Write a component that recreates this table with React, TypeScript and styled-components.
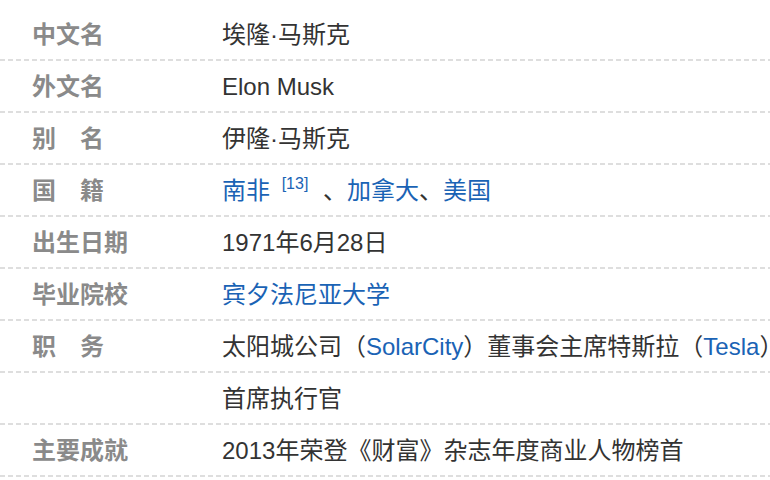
import React from 'react'
import styled, { createGlobalStyle } from 'styled-components'

const GlobalStyle = createGlobalStyle`
  html, body {
    margin: 0;
    padding: 0;
    background: #fff;
  }
  body {
    font-family: "Liberation Sans", "Noto Sans CJK SC", sans-serif;
    overflow: hidden;
  }
`

const InfoList = styled.div`
  width: 770px;
  height: 480px;
  padding-top: 9px;
  box-sizing: border-box;
  overflow: hidden;
`

const Row = styled.div`
  display: flex;
  align-items: center;
  height: 52px;
  padding-left: 32px;
  box-sizing: border-box;
  white-space: nowrap;
  background:
    repeating-linear-gradient(to right, #dedede 0 5px, transparent 5px 8px)
    left bottom / 100% 2px no-repeat;
`

const Label = styled.div`
  flex-shrink: 0;
  width: 190px;
  font-size: 24px;
  line-height: 30px;
  font-weight: 700;
  color: #8a8a8a;
`

const Value = styled.div`
  font-size: 24px;
  line-height: 30px;
  color: #333;
`

const Link = styled.a`
  color: #1a63b5;
  text-decoration: none;
  cursor: pointer;
`

const Ref = styled.sup`
  font-size: 16px;
  line-height: 0;
  vertical-align: 10px;
  margin: 0 8px 0 5px;
  color: #1a63b5;
`

type Item = { label: string; value: React.ReactNode }

const items: Item[] = [
  { label: '中文名', value: '埃隆·马斯克' },
  { label: '外文名', value: 'Elon Musk' },
  { label: '别\u3000名', value: '伊隆·马斯克' },
  {
    label: '国\u3000籍',
    value: (
      <>
        <Link>南非</Link> <Ref>[13]</Ref>&nbsp;、<Link>加拿大</Link>、<Link>美国</Link>
      </>
    ),
  },
  { label: '出生日期', value: '1971年6月28日' },
  { label: '毕业院校', value: <Link>宾夕法尼亚大学</Link> },
  {
    label: '职\u3000务',
    value: (
      <>
        太阳城公司（<Link>SolarCity</Link>）董事会主席特斯拉（<Link>Tesla</Link>）
      </>
    ),
  },
  { label: '', value: '首席执行官' },
  { label: '主要成就', value: '2013年荣登《财富》杂志年度商业人物榜首' },
]

export default function App() {
  return (
    <>
      <GlobalStyle />
      <InfoList>
        {items.map((item, i) => (
          <Row key={i}>
            <Label>{item.label}</Label>
            <Value>{item.value}</Value>
          </Row>
        ))}
      </InfoList>
    </>
  )
}
